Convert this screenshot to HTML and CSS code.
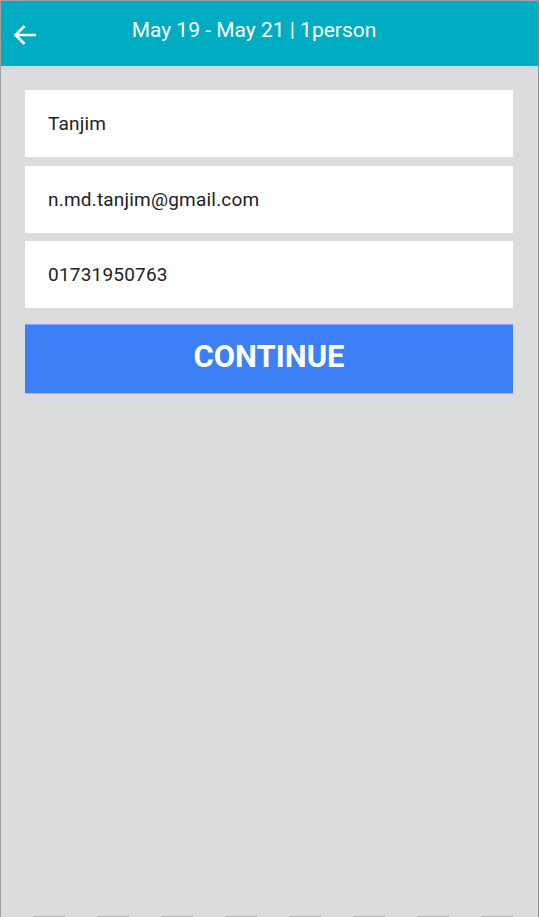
FILE: index.html
```
<!DOCTYPE html>
<html lang="en">
<head>
<meta charset="utf-8">
<title>Booking</title>
<link rel="stylesheet" href="styles.css">
</head>
<body>
<div class="frame">
  <header class="topbar">
    <button class="back" aria-label="Back">
      <svg width="24" height="22" viewBox="0 0 24 22" aria-hidden="true">
        <path d="M23 11H2.5M11.5 2L2.5 11L11.5 20" fill="none" stroke="#fff" stroke-width="2.6" stroke-linecap="butt" stroke-linejoin="miter"/>
      </svg>
    </button>
    <h1 class="title">May 19 - May 21 | 1person</h1>
  </header>
  <main class="content">
    <div class="field">Tanjim</div>
    <div class="field">n.md.tanjim@gmail.com</div>
    <div class="field">01731950763</div>
    <button class="continue">CONTINUE</button>
  </main>
  <div class="dashes"></div>
</div>
</body>
</html>
```
FILE: styles.css
```
html, body {
  margin: 0;
  padding: 0;
  height: 100%;
}
body {
  font-family: Roboto, "Noto Sans", sans-serif;
  background: #dcdbdd;
}
.frame {
  box-sizing: border-box;
  height: 917px;
  width: 539px;
  border: 1px solid #a3a3a3;
  border-bottom: none;
  border-right-color: #8e8e8e;
  background: #dcdbdd;
  display: flex;
  flex-direction: column;
}
.topbar {
  height: 65px;
  background: #00acc1;
  display: flex;
  align-items: center;
  box-shadow: 0 1px 0 #bfe6ec, 0 2px 2px rgba(0,0,0,0.05);
  flex-shrink: 0;
}
.back {
  background: none;
  border: none;
  padding: 0;
  margin: 0 0 0 11px;
  width: 26px;
  height: 24px;
  display: flex;
  align-items: center;
  justify-content: center;
  margin-top: 3px;
}
.title {
  flex: 1;
  margin: 0;
  padding-right: 68px;
  text-align: center;
  color: #fff;
  font-weight: 400;
  font-size: 21px;
  margin-top: -7px;
}
.content {
  flex: 1;
  padding: 24px 25px 0 24px;
  display: flex;
  flex-direction: column;
}
.field {
  height: 67px;
  background: #fff;
  display: flex;
  align-items: center;
  padding-left: 23px;
  font-size: 19px;
  color: #222;
  letter-spacing: 0.2px;
  margin-bottom: 8.5px;
}
.continue {
  margin-top: 7.5px;
  height: 69px;
  border: none;
  border-top: 1px solid #7aa6f7;
  background: #3d80f6;
  color: #fff;
  font-family: Roboto, "Noto Sans", sans-serif;
  font-weight: 700;
  font-size: 31px;
  box-shadow: 0 1px 0 #a9b9d8;
  padding: 0 0 6px 0;
}
.dashes {
  height: 1px;
  flex-shrink: 0;
  background: repeating-linear-gradient(to right, transparent 0, transparent 32px, #b3b3b3 32px, #b3b3b3 64px);
}
```
